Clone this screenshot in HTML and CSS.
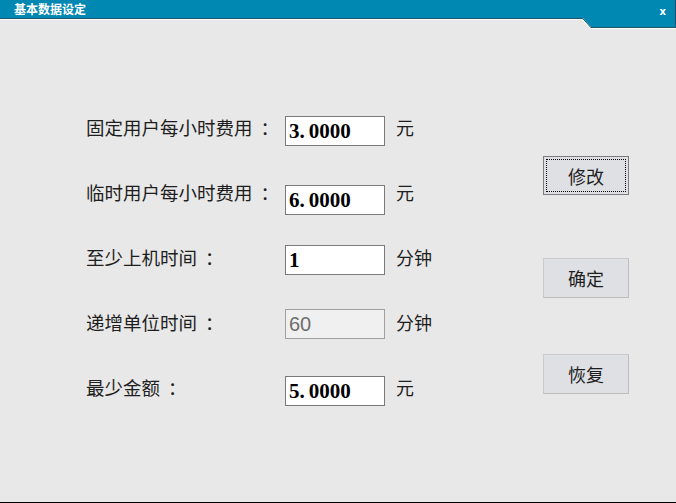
FILE: index.html
```html
<!DOCTYPE html>
<html lang="zh-CN">
<head>
<meta charset="utf-8">
<title>基本数据设定</title>
<link rel="stylesheet" href="styles.css">
</head>
<body>
<div class="window">
  <header class="titlebar">
    <svg class="titlebar-bg" width="676" height="30" viewBox="0 0 676 30" aria-hidden="true">
      <path d="M0 0 H676 V27 H591 L583 18 H0 Z" fill="#0087b2"/>
      <polyline points="0,18.5 582.8,18.5 590.8,27.5 676,27.5" fill="none" stroke="#1f5566" stroke-width="1"/>
      <polyline points="0,19.5 582.3,19.5 590.3,28.5 676,28.5" fill="none" stroke="#ffffff" stroke-width="1"/>
      <line x1="675.5" y1="0" x2="675.5" y2="28" stroke="#1f5566" stroke-width="1"/>
    </svg>
    <span class="title">基本数据设定</span>
    <span class="close">x</span>
  </header>
  <main class="content">
    <section class="form">
      <div class="row">
        <span class="label">固定用户每小时费用<span class="colon">：</span></span>
        <div class="field">3.<span class="gap"></span>0000</div>
        <span class="unit">元</span>
      </div>
      <div class="row">
        <span class="label">临时用户每小时费用<span class="colon">：</span></span>
        <div class="field low">6.<span class="gap"></span>0000</div>
        <span class="unit">元</span>
      </div>
      <div class="row">
        <span class="label">至少上机时间<span class="colon">：</span></span>
        <div class="field mid">1</div>
        <span class="unit">分钟</span>
      </div>
      <div class="row">
        <span class="label">递增单位时间<span class="colon">：</span></span>
        <div class="field disabled high">60</div>
        <span class="unit">分钟</span>
      </div>
      <div class="row">
        <span class="label">最少金额<span class="colon">：</span></span>
        <div class="field">5.<span class="gap"></span>0000</div>
        <span class="unit">元</span>
      </div>
    </section>
    <aside class="actions">
      <button class="btn btn-default" type="button">修改</button>
      <button class="btn btn-ok" type="button">确定</button>
      <button class="btn btn-reset" type="button">恢复</button>
    </aside>
  </main>
</div>
</body>
</html>
```

FILE: styles.css
```css
html, body {
  margin: 0;
  padding: 0;
  background: #e8e8e8;
}

.window {
  width: 676px;
  height: 503px;
  box-sizing: border-box;
  background: #e8e8e8;
  border-bottom: 1px solid #000;
  overflow: hidden;
}

.titlebar {
  position: relative;
  height: 30px;
  display: flex;
  align-items: flex-start;
  justify-content: space-between;
}

.titlebar-bg {
  position: absolute;
  left: 0;
  top: 0;
}

.title {
  position: relative;
  margin-left: 14px;
  line-height: 18px;
  height: 18px;
  color: #ffffff;
  font-family: "Noto Sans CJK SC", sans-serif;
  font-weight: 700;
  font-size: 12px;
}

.close {
  position: relative;
  margin-right: 10px;
  margin-top: 5px;
  line-height: 14px;
  color: #ffffff;
  font-family: "DejaVu Sans", sans-serif;
  font-weight: 700;
  font-size: 10px;
}

.content {
  display: flex;
  padding-left: 86px;
}

.form {
  width: 457px;
  padding-top: 65px;
  display: flex;
  flex-direction: column;
}

.row {
  height: 65px;
  display: flex;
  align-items: flex-start;
}

.label,
.unit {
  margin-top: 20px;
  line-height: 24px;
  font-family: "Noto Sans CJK SC", sans-serif;
  font-size: 18.5px;
  color: #1e1e1e;
}

.label {
  width: 199px;
  white-space: nowrap;
}

.colon {
  margin-left: 8px;
}

.unit {
  margin-left: 11px;
  font-size: 18px;
}

.field {
  margin-top: 21px;
  width: 100px;
  height: 30px;
  box-sizing: border-box;
  border: 1px solid #7a7a7a;
  background: #ffffff;
  padding-left: 3px;
  font-family: "Liberation Serif", serif;
  font-weight: 700;
  font-size: 21px;
  line-height: 28px;
  color: #000;
  white-space: nowrap;
}

.field .gap {
  display: inline-block;
  width: 4px;
}

.field.low { margin-top: 25px; }
.field.mid { margin-top: 20px; }
.field.high { margin-top: 19px; }

.field.disabled {
  background: #f0f0f0;
  border-color: #a0a0a0;
  font-family: "Liberation Sans", sans-serif;
  font-weight: 400;
  font-size: 20px;
  color: #6d6d6d;
}

.actions {
  display: flex;
  flex-direction: column;
  padding-top: 126px;
}

.btn {
  width: 86px;
  height: 40px;
  margin: 0;
  padding: 0;
  box-sizing: border-box;
  background: #dfe0e4;
  border: 1px solid #cbcbcb;
  border-bottom-color: #bdbdbd;
  border-right-color: #bdbdbd;
  font-family: "Noto Sans CJK SC", sans-serif;
  font-size: 18px;
  color: #1e1e1e;
  cursor: pointer;
}

.btn-default {
  height: 39px;
  border-color: #7d7d7d;
  outline: 1px dotted #000;
  outline-offset: -4px;
}

.btn-ok { margin-top: 63px; }
.btn-reset { margin-top: 56px; }
```
